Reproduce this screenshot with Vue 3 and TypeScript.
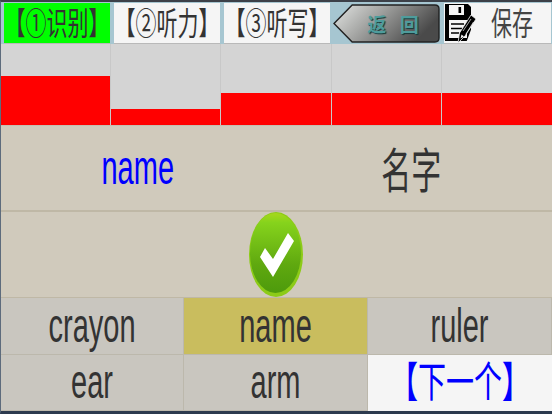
<script setup lang="ts">
const tabs = ['【①识别】', '【②听力】', '【③听写】']
const bars = [49, 16, 32, 32, 32]
const options = ['crayon', 'name', 'ruler', 'ear', 'arm']
</script>

<template>
  <div class="screen">
    <header class="topbar">
      <button v-for="(t, i) in tabs" :key="t" class="tab" :class="{ on: i === 0 }">
        <span class="tall">{{ t }}</span>
      </button>
      <button class="back">
        <svg class="back-bg" viewBox="0 0 106 41" preserveAspectRatio="none">
          <defs>
            <linearGradient id="bk" x1="0" y1="0" x2="1" y2="0.35">
              <stop offset="0" stop-color="#e4e6e4" />
              <stop offset="0.4" stop-color="#a9aaa8" />
              <stop offset="1" stop-color="#4a4a4a" />
            </linearGradient>
          </defs>
          <path d="M1 21 L19 2 H101 Q105 2 105 6 V36 Q105 40 101 40 H19 Z" fill="url(#bk)" stroke="#222" stroke-width="1.4" />
        </svg>
        <span class="back-text">返 回</span>
      </button>
      <button class="save">
        <svg class="save-icon" viewBox="0 0 32 40">
          <path d="M1 1 H24 L27 4 V38 H1 Z" fill="#000" />
          <rect x="5" y="2" width="15" height="10" fill="#f5f5f5" />
          <rect x="14.5" y="4" width="2.6" height="6" fill="#000" />
          <rect x="5" y="17" width="18" height="18" fill="#f5f5f5" />
          <path d="M7 21 H20 M7 25.5 H18 M7 30 H15" stroke="#000" stroke-width="1.6" />
          <path d="M22 40 H28 V24 Z" fill="#f5f5f5" />
          <path d="M27 12 L32 16 L21 33 L14 40 L15.5 30 Z" fill="#000" stroke="#f5f5f5" stroke-width="0.8" />
          <path d="M16.5 35.5 L17.5 31.5 L20 33.5 Z" fill="#f5f5f5" />
          <path d="M19 28 L27 16 M22 31 L29.5 19" stroke="#f5f5f5" stroke-width="0.7" />
        </svg>
        <span class="tall save-text">保存</span>
      </button>
    </header>

    <section class="bars">
      <div v-for="(h, i) in bars" :key="i" class="bar">
        <div class="fill" :style="{ height: h + 'px' }"></div>
      </div>
    </section>

    <section class="word-row">
      <div class="word"><span class="tall big blue">name</span></div>
      <div class="word"><span class="tall big cn">名字</span></div>
    </section>

    <section class="result-row">
      <svg class="ok" viewBox="0 0 54 85" preserveAspectRatio="none">
        <defs>
          <linearGradient id="okBg" x1="0" y1="0" x2="0" y2="1">
            <stop offset="0" stop-color="#a6d81c" />
            <stop offset="0.12" stop-color="#86d31c" />
            <stop offset="0.65" stop-color="#5fa80f" />
            <stop offset="1" stop-color="#4d9a0c" />
          </linearGradient>
        </defs>
        <ellipse cx="27" cy="42.5" rx="27" ry="42.5" fill="#8ccb17" />
        <ellipse cx="26.5" cy="41" rx="25.5" ry="40" fill="url(#okBg)" />
        <path d="M11 45 L16 36 L24 47 L39 21 L45 29 L24 65 Z" fill="#fff" />
      </svg>
    </section>

    <section class="options">
      <div v-for="o in options" :key="o" class="opt" :class="{ picked: o === 'name' }">
        <span class="tall big">{{ o }}</span>
      </div>
      <div class="opt next"><span class="tall big blue nexttext">【下一个】</span></div>
    </section>
  </div>
</template>

<style scoped>
.screen {
  width: 552px;
  height: 414px;
  box-sizing: border-box;
  border-top: 2px solid #3c4048;
  border-left: 1px solid #5d6b7c;
  border-bottom: 3px solid #2c3a4e;
  background: #d0cabc;
  display: flex;
  flex-direction: column;
  overflow: hidden;
  font-family: "Liberation Sans", "Noto Sans CJK SC", sans-serif;
  color: #333;
}
.tall {
  display: inline-block;
  transform: scaleY(1.5);
  white-space: nowrap;
  line-height: 1;
}
.big {
  font-size: 29px;
  transform: scaleY(1.65);
}
.cn {
  font-size: 30px;
  position: relative;
  top: 4px;
  left: -3px;
  transform: scaleY(1.6);
}
.nexttext {
  font-size: 28px;
  transform: scaleY(1.5);
}
.blue {
  color: #0000ff;
}
button {
  border: 0;
  padding: 0;
  font: inherit;
  color: inherit;
  margin: 0;
}
.topbar {
  height: 42px;
  flex: none;
  display: grid;
  grid-template-columns: 106px 106px 106px 106px 107px;
  column-gap: 4px;
  padding: 1px 0 1px 3px;
  box-sizing: border-box;
  background: #a6c6d1;
}
.tab,
.save {
  background: #f5f5f5;
  font-size: 21px;
  display: flex;
  align-items: center;
  justify-content: center;
  box-shadow: 0 1px 0 #b9b9b9;
}
.tab.on {
  background: #00ff00;
}
.back {
  position: relative;
  background: transparent;
  margin-left: -1px;
  display: flex;
  align-items: center;
  justify-content: center;
}
.back-bg {
  position: absolute;
  inset: 0;
  width: 100%;
  height: 100%;
}
.back-text {
  position: relative;
  margin-left: 13px;
  font-size: 19px;
  font-weight: 700;
  color: #4e9c9c;
  white-space: pre;
  word-spacing: 8px;
  text-shadow: 1px 1px 1px #153a3a;
}
.save-icon {
  width: 32px;
  height: 40px;
  flex: none;
}
.save {
  justify-content: flex-start;
}
.save-text {
  margin-left: 15px;
  font-size: 21px;
  color: #444;
}
.bars {
  height: 81px;
  flex: none;
  display: grid;
  grid-template-columns: 109px 110px 111px 110px 1fr;
}
.bar {
  background: #d4d4d4;
  border-left: 1px solid #c8c8c8;
  box-sizing: border-box;
  display: flex;
  align-items: flex-end;
}
.bar:first-child {
  border-left: 0;
}
.fill {
  flex: 1;
  background: #ff0000;
}
.word-row {
  height: 87px;
  flex: none;
  display: grid;
  grid-template-columns: 1fr 1fr;
  box-sizing: border-box;
  border-top: 1px solid #c5bfb0;
  border-bottom: 2px solid #bfb8a6;
}
.word {
  display: flex;
  align-items: center;
  justify-content: center;
}
.word:first-child {
  padding-right: 2px;
}
.result-row {
  height: 86px;
  flex: none;
  display: flex;
  align-items: center;
  justify-content: center;
  border-bottom: 1px solid #bfb8a6;
  box-sizing: border-box;
}
.ok {
  width: 54px;
  height: 85px;
  flex: none;
  margin-left: -2px;
  overflow: visible;
}
.options {
  flex: 1;
  display: grid;
  grid-template-columns: 183px 184px 1fr;
  grid-template-rows: 57px 1fr;
}
.opt {
  background: #c9c6bf;
  display: flex;
  align-items: center;
  justify-content: center;
  box-sizing: border-box;
  border-right: 1px solid #bcb8ac;
  border-bottom: 1px solid #bcb8ac;
}
.opt.picked {
  background: #c9bd5e;
}
.opt.next {
  background: #f5f5f5;
  border: 0;
}
</style>

<style>
html,
body {
  margin: 0;
  background: #d0cabc;
}
</style>
